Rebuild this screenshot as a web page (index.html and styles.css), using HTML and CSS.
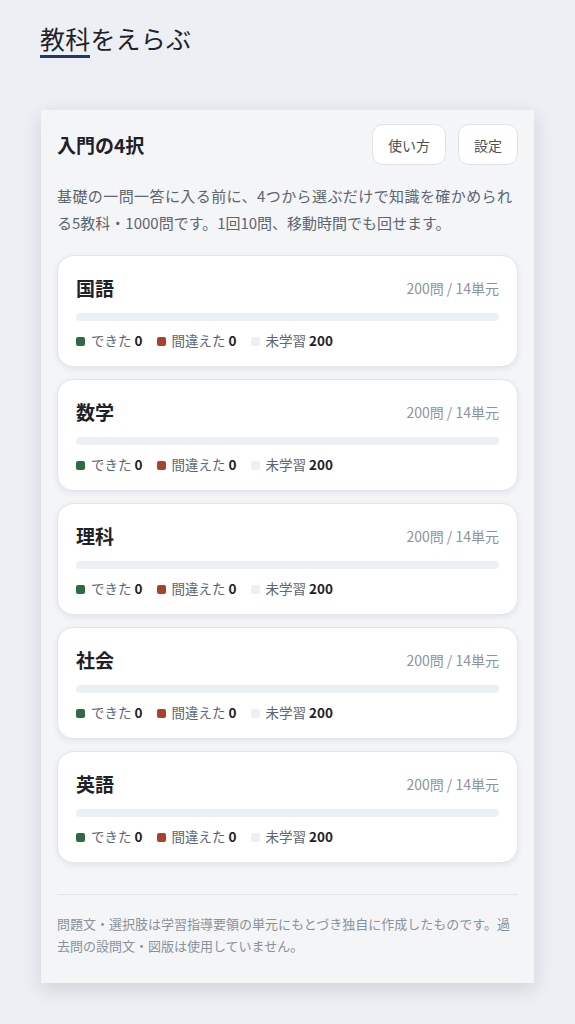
FILE: index.html
```html
<!DOCTYPE html>
<html lang="ja">
<head>
  <meta charset="UTF-8">
  <title>教科をえらぶ</title>
  <link rel="stylesheet" href="styles.css">
</head>
<body>
  <h1 class="page-title"><span class="accent">教科</span>をえらぶ</h1>

  <main class="panel">
    <div class="panel-head">
      <h2>入門の4択</h2>
      <div class="actions">
        <button class="btn">使い方</button>
        <button class="btn">設定</button>
      </div>
    </div>
    <p class="lead">基礎の一問一答に入る前に、4つから選ぶだけで知識を確かめられる5教科・1000問です。1回10問、移動時間でも回せます。</p>

    <div class="subjects">
      <div class="subject">
        <div class="subject-top"><h3>国語</h3><span class="meta">200問 / 14単元</span></div>
        <div class="bar"></div>
        <div class="legend">
          <span><i class="dot ok"></i>できた <b>0</b></span>
          <span><i class="dot ng"></i>間違えた <b>0</b></span>
          <span><i class="dot todo"></i>未学習 <b>200</b></span>
        </div>
      </div>
      <div class="subject">
        <div class="subject-top"><h3>数学</h3><span class="meta">200問 / 14単元</span></div>
        <div class="bar"></div>
        <div class="legend">
          <span><i class="dot ok"></i>できた <b>0</b></span>
          <span><i class="dot ng"></i>間違えた <b>0</b></span>
          <span><i class="dot todo"></i>未学習 <b>200</b></span>
        </div>
      </div>
      <div class="subject">
        <div class="subject-top"><h3>理科</h3><span class="meta">200問 / 14単元</span></div>
        <div class="bar"></div>
        <div class="legend">
          <span><i class="dot ok"></i>できた <b>0</b></span>
          <span><i class="dot ng"></i>間違えた <b>0</b></span>
          <span><i class="dot todo"></i>未学習 <b>200</b></span>
        </div>
      </div>
      <div class="subject">
        <div class="subject-top"><h3>社会</h3><span class="meta">200問 / 14単元</span></div>
        <div class="bar"></div>
        <div class="legend">
          <span><i class="dot ok"></i>できた <b>0</b></span>
          <span><i class="dot ng"></i>間違えた <b>0</b></span>
          <span><i class="dot todo"></i>未学習 <b>200</b></span>
        </div>
      </div>
      <div class="subject">
        <div class="subject-top"><h3>英語</h3><span class="meta">200問 / 14単元</span></div>
        <div class="bar"></div>
        <div class="legend">
          <span><i class="dot ok"></i>できた <b>0</b></span>
          <span><i class="dot ng"></i>間違えた <b>0</b></span>
          <span><i class="dot todo"></i>未学習 <b>200</b></span>
        </div>
      </div>
    </div>

    <p class="note">問題文・選択肢は学習指導要領の単元にもとづき独自に作成したものです。過去問の設問文・図版は使用していません。</p>
  </main>
</body>
</html>
```

FILE: styles.css
```css
body {
  margin: 0;
  padding: 20px 41px 41px;
  background-color: #eceff3;
  color: #1e2228;
  font-family: 'Noto Sans CJK JP', 'Noto Sans', sans-serif;
}

.page-title {
  margin: 0 0 52px;
  font-size: 25px;
  font-weight: 400;
  line-height: 36px;
  letter-spacing: 0.2px;
  color: #1f2329;
  margin-left: -1px;
}

.page-title .accent {
  display: inline-block;
  border-bottom: 3px solid #22386b;
  line-height: 34px;
}

.panel {
  background-color: #f4f5f7;
  padding: 14px 16px 26px;
  box-shadow: 0 6px 18px rgba(30, 40, 60, 0.14);
}

.panel-head {
  display: flex;
  justify-content: space-between;
  align-items: center;
}

.panel-head h2 {
  margin: 0;
  font-size: 19px;
  font-weight: 700;
}

.actions {
  display: flex;
  gap: 12px;
}

.btn {
  height: 41px;
  padding: 0 15px;
  font-family: inherit;
  font-size: 14px;
  color: #4a525c;
  background-color: #fff;
  border: 1px solid #dfe3e8;
  border-radius: 11px;
}

.lead {
  margin: 17px 0 19px;
  padding-right: 6px;
  font-size: 15px;
  line-height: 27px;
  text-align: justify;
  color: #5d6570;
}

.subjects {
  display: flex;
  flex-direction: column;
  gap: 12px;
}

.subject {
  background-color: #fff;
  border: 1px solid #e2e5ea;
  border-radius: 16px;
  padding: 18px 18px 15px;
  box-shadow: 0 2px 6px rgba(30, 40, 60, 0.08);
}

.subject-top {
  display: flex;
  justify-content: space-between;
  align-items: center;
}

.subject h3 {
  margin: 0;
  font-size: 19px;
  font-weight: 700;
  line-height: 28px;
}

.meta {
  font-size: 14px;
  color: #8c939c;
}

.bar {
  height: 8px;
  margin-top: 11px;
  border-radius: 4px;
  background-color: #edf0f3;
}

.legend {
  display: flex;
  gap: 14px;
  margin-top: 8px;
  font-size: 13.5px;
  line-height: 22px;
  color: #5d6570;
}

.legend b {
  color: #1e2228;
}

.dot {
  display: inline-block;
  width: 9px;
  height: 9px;
  border-radius: 2px;
  margin-right: 6px;
  vertical-align: 0;
}

.dot.ok { background-color: #2e6a45; }
.dot.ng { background-color: #a8432b; }
.dot.todo { background-color: #edf0f3; }

.note {
  margin: 31px 0 0;
  padding-top: 18px;
  border-top: 1px solid #e1e4e8;
  font-size: 13px;
  line-height: 22px;
  color: #8a919a;
}
```
